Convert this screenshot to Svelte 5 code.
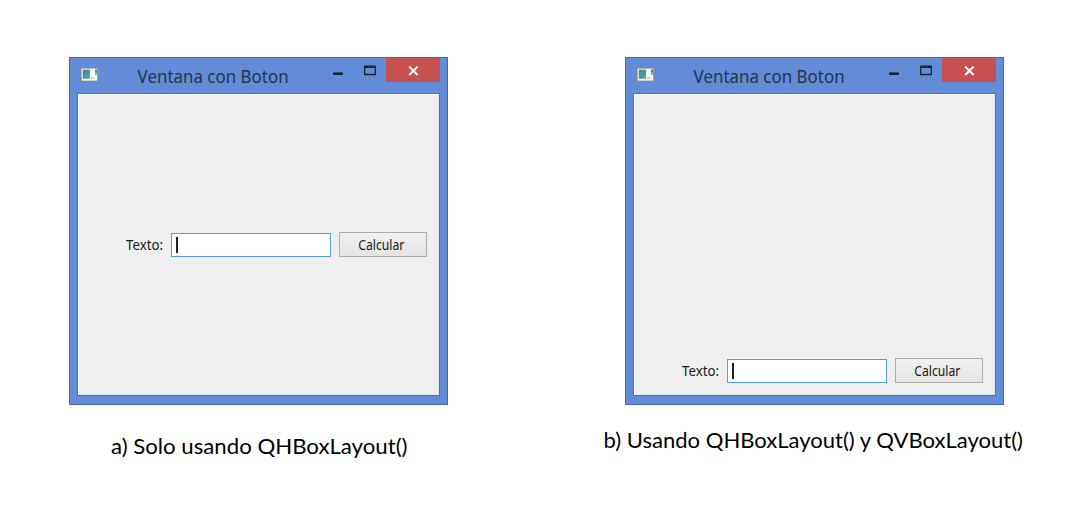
<script>
  const examples = [
    { id: 'a', caption: 'a) Solo usando QHBoxLayout()', length: 296.5, x: 42, y: 49 },
    { id: 'b', caption: 'b) Usando QHBoxLayout() y QVBoxLayout()', length: 419.5, x: -21.5, y: 43 }
  ];
</script>

<main>
  {#each examples as ex (ex.id)}
    <section class="example">
      <div class="window">
        <header>
          <svg class="appicon" width="20" height="17" viewBox="0 0 20 17">
            <rect x="0.4" y="1.4" width="18" height="14.4" fill="#85898c" />
            <rect x="1.6" y="2.6" width="15.6" height="12" fill="#f7f8f8" />
            <defs>
              <linearGradient id="g-{ex.id}" x1="0" y1="0" x2="1" y2="1">
                <stop offset="0" stop-color="#4478ae" />
                <stop offset="1" stop-color="#55b878" />
              </linearGradient>
            </defs>
            <rect x="2.8" y="3.6" width="7.2" height="9.2" fill="url(#g-{ex.id})" />
            <rect x="15" y="3.6" width="2" height="2.5" fill="#4e84ab" />
            <rect x="15" y="6.1" width="2" height="2.7" fill="#62b784" />
            <rect x="11" y="11" width="3.2" height="1.8" fill="#c5c8ca" />
          </svg>
          <svg class="title" width="160" height="34">
            <text x="0.6" y="24.9" textLength="151" lengthAdjust="spacingAndGlyphs">Ventana con Boton</text>
          </svg>
          <svg class="controls" width="60" height="24">
            <rect x="5" y="15.4" width="10" height="2.6" fill="#20242b" />
            <path d="M36 8.5h12v9.7h-12zM37.3 11v5.8h9.4v-5.8z" fill="#20242b" fill-rule="evenodd" />
          </svg>
          <div class="close">
            <svg width="54" height="24">
              <path d="M23.2 9.6l8.4 8.4M31.6 9.6l-8.4 8.4" stroke="#fff" stroke-width="2" />
            </svg>
          </div>
        </header>
        <div class="client" class:bottom={ex.id === 'b'}>
          <div class="row">
            <svg class="label" width="37" height="25">
              <text x="0" y="18" textLength="37" lengthAdjust="spacingAndGlyphs">Texto:</text>
            </svg>
            <div class="field"><i></i></div>
            <div class="button">
              <svg class="label" width="52" height="23">
                <text x="0.3" y="17" textLength="46" lengthAdjust="spacingAndGlyphs">Calcular</text>
              </svg>
            </div>
          </div>
        </div>
      </div>
      <svg class="caption" width="379" height="70">
        <text x={ex.x} y={ex.y} textLength={ex.length} lengthAdjust="spacingAndGlyphs">{ex.caption}</text>
      </svg>
    </section>
  {/each}
</main>

<style>
  :global(body) {
    margin: 0;
    background: #fff;
  }
  main {
    box-sizing: border-box;
    width: 1086px;
    height: 510px;
    padding: 57px 0 0 69px;
    display: flex;
    gap: 177px;
    overflow: hidden;
  }
  svg {
    display: block;
    flex: none;
  }
  .example {
    width: 379px;
    flex: none;
  }
  .window {
    box-sizing: border-box;
    height: 348px;
    background: #628cd7;
    border: 1px solid #4768a8;
    padding: 0 7px 8px;
  }
  header {
    display: flex;
    height: 35px;
  }
  .appicon {
    margin: 8px 0 0 3px;
  }
  .title {
    margin-left: 37px;
    font: 18px 'Noto Sans', sans-serif;
    fill: #27344c;
  }
  .controls {
    margin-left: 31px;
    margin-right: -2px;
    margin-top: -1px;
  }
  .close {
    width: 54px;
    height: 24px;
    background: #c75050;
  }
  .close svg {
    margin-top: -1px;
  }
  .client {
    box-sizing: border-box;
    height: 303px;
    background: #efefef;
    border: 1px solid #4c72b9;
    box-shadow: inset 1px 1px #f9fafc, inset -1px -1px #dfe5ef;
    display: flex;
    align-items: center;
    padding: 0 12px 1px 48px;
  }
  .client.bottom {
    align-items: flex-end;
    padding-bottom: 12px;
  }
  .row {
    display: flex;
    align-items: center;
    height: 25px;
  }
  .label {
    font: 13.5px 'Noto Sans', sans-serif;
    fill: #1a1a20;
  }
  .field {
    box-sizing: border-box;
    width: 160px;
    height: 24px;
    margin: 1px 8px 0 8px;
    border: 1px solid #569de5;
    background: #fff;
    padding: 3px 4px;
  }
  .field i {
    display: block;
    width: 1.5px;
    height: 16px;
    background: #222;
  }
  .button {
    box-sizing: border-box;
    width: 88px;
    height: 25px;
    border: 1px solid #acacac;
    background: linear-gradient(#f0f0f0, #e5e5e5);
    padding-left: 18px;
  }
  .caption {
    overflow: visible;
    font: 20.3px Lato, Carlito, sans-serif;
    fill: #000;
  }
</style>
